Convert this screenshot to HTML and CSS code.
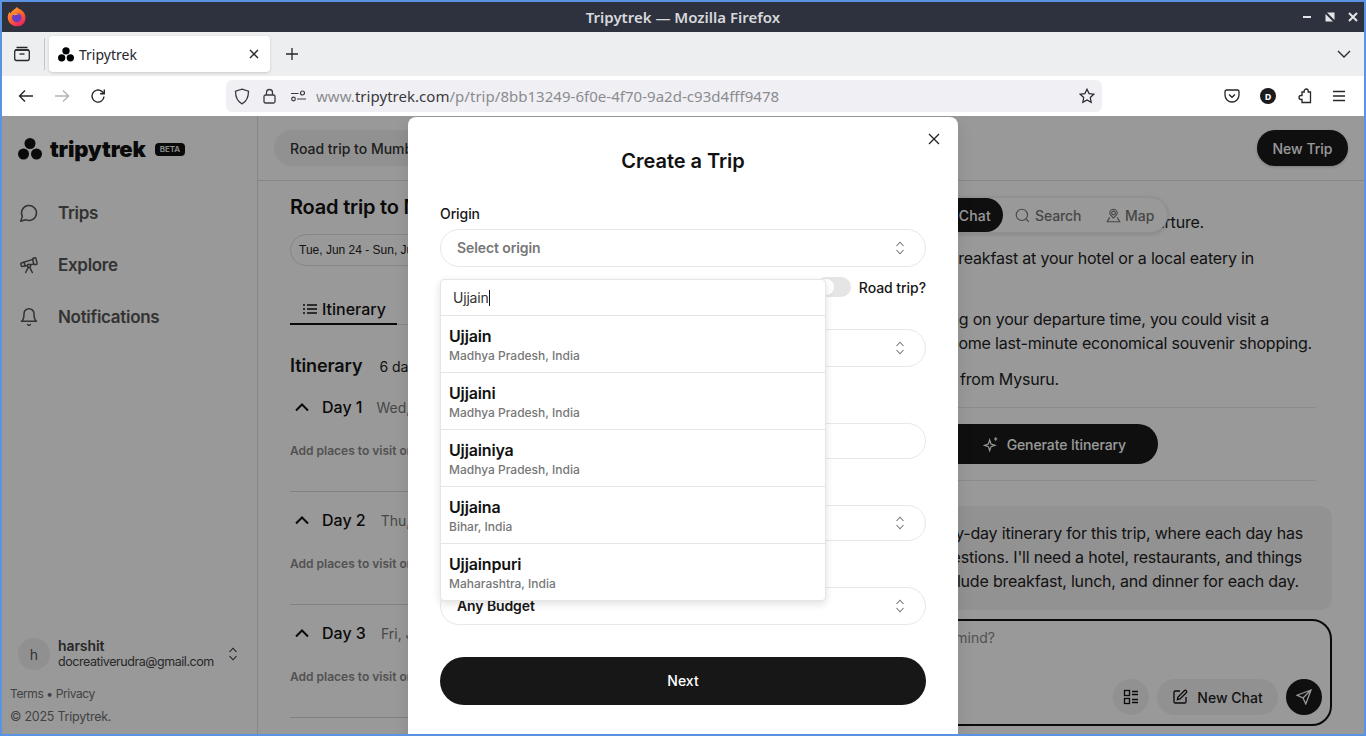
FILE: index.html
```html
<!DOCTYPE html>
<html>
	<head>
		<meta charset="UTF-8">
		<title>Tripytrek</title>
		<link rel="stylesheet" href="styles.css">
	</head>
	<body>
		<svg class="defs" width="0" height="0">
			<symbol id="dots" viewBox="0 0 24 22">
				<circle cx="12" cy="5.5" r="5.5"/>
				<circle cx="5.5" cy="16" r="5.5"/>
				<circle cx="18.5" cy="16" r="5.5"/>
			</symbol>
			<symbol id="updown" viewBox="0 0 16 16">
				<path d="M4.5 6 8 2.2 11.5 6M4.5 10 8 13.8 11.5 10" fill="none" stroke="currentColor" stroke-width="1.1"/>
			</symbol>
			<symbol id="chev" viewBox="0 0 16 16">
				<path d="M2 11.5 8 5.5l6 6" fill="none" stroke="currentColor" stroke-width="2"/>
			</symbol>
		</svg>
		<div class="window">
			<div class="titlebar">
				<svg class="fx" width="22" height="22" viewBox="0 0 20 20">
					<defs>
						<linearGradient id="fxg" x1="0" y1="0" x2="0.6" y2="1">
							<stop offset="0" stop-color="#ffb02e"/>
							<stop offset="0.55" stop-color="#ff6a2a"/>
							<stop offset="1" stop-color="#f0255f"/>
						</linearGradient>
					</defs>
					<path d="M10 1c.6 1.6 3.200 2 5 3.600 2.500 2.300 3.200 5.400 2.600 7.800C16.700 16.400 13.700 18.500 10 18.500 5.400 18.500 1.600 15 1.600 10.500c0-2 .6-3.700 1.500-5 .4.600.8 1 1.300 1.200C5.200 4 7.600 3.800 10 1z" fill="url(#fxg)"/>
					<circle cx="9.800" cy="10.600" r="4.300" fill="#6a3bc4"/>
					<path d="M5.200 7.500c2-1.200 5.800-1.400 7.400.6-1.600-.5-3-.3-4 .4z" fill="#ff9a2e"/>
				</svg>
				<span class="titlebar-text">Tripytrek — Mozilla Firefox</span>
				<div class="wm-btns">
					<svg width="12" height="12" viewBox="0 0 12 12"><rect x="2" y="5" width="8" height="2" fill="#e4e5e8"/></svg>
					<svg width="12" height="12" viewBox="0 0 12 12"><path d="M1.500 3v7.500H9zM3 1.500h7.500V9z" fill="#e4e5e8"/></svg>
					<svg width="12" height="12" viewBox="0 0 12 12"><path d="M2 2l8 8M10 2l-8 8" stroke="#e4e5e8" stroke-width="2"/></svg>
				</div>
			</div>

			<div class="tabbar">
				<div class="tab-side">
					<svg width="18" height="18" viewBox="0 0 18 18" fill="none" stroke="#26262b" stroke-width="1.300">
						<path d="M3.500 2.500h11M2 5h14"/>
						<rect x="1.700" y="5" width="14.600" height="10.500" rx="2"/>
						<path d="M6.500 9h5"/>
					</svg>
				</div>
				<div class="tab">
					<svg class="tab-ico" width="16" height="15"><use href="#dots"/></svg>
					<span class="tab-name">Tripytrek</span>
					<svg width="10" height="10" viewBox="0 0 10 10"><path d="M1 1l8 8M9 1L1 9" stroke="#26262b" stroke-width="1.400"/></svg>
				</div>
				<svg class="tab-plus" width="14" height="14" viewBox="0 0 14 14"><path d="M7 1v12M1 7h12" stroke="#26262b" stroke-width="1.300"/></svg>
				<svg class="tab-list" width="14" height="8" viewBox="0 0 14 8"><path d="M1 1l6 6 6-6" fill="none" stroke="#26262b" stroke-width="1.300"/></svg>
			</div>

			<div class="navbar">
				<svg class="nav-btn" width="16" height="14" viewBox="0 0 16 14" fill="none" stroke="#26262b" stroke-width="1.400"><path d="M15 7H1.500M7 1.500 1.500 7 7 12.500"/></svg>
				<svg class="nav-btn" width="16" height="14" viewBox="0 0 16 14" fill="none" stroke="#b4b4b8" stroke-width="1.400"><path d="M1 7h13.500M9 1.500 14.500 7 9 12.500"/></svg>
				<svg class="nav-btn" width="16" height="16" viewBox="0 0 16 16" fill="none" stroke="#26262b" stroke-width="1.400"><path d="M14 8.500A6 6 0 1 1 11.800 3.400L14 5.500"/><path d="M14.300 1.500v4.200h-4.200" /></svg>
				<div class="urlbar">
					<svg width="16" height="17" viewBox="0 0 16 17" fill="none" stroke="#3a3a40" stroke-width="1.300"><path d="M8 1.200 14.500 3.200c0 6-1.500 10-6.500 12.600C3 13.200 1.500 9.200 1.500 3.200z"/></svg>
					<svg width="13" height="16" viewBox="0 0 13 16" fill="none" stroke="#3a3a40" stroke-width="1.300"><rect x="1" y="7" width="11" height="8" rx="1.500"/><path d="M3.500 7V4.500a3 3 0 0 1 6 0V7"/></svg>
					<svg class="perm-ico" width="15" height="12" viewBox="0 0 15 12" fill="none" stroke="#3a3a40" stroke-width="1.200"><path d="M0 3.500h7.500M6 9h9"/><circle cx="11.500" cy="3" r="2"/><circle cx="2.500" cy="9" r="1.800"/></svg>
					<span class="url"><span class="url-soft">www.</span><span class="url-host">tripytrek.com</span><span class="url-soft">/p/trip/8bb13249-6f0e-4f70-9a2d-c93d4fff9478</span></span>
					<svg class="url-star" width="16" height="16" viewBox="0 0 16 16" fill="none" stroke="#26262b" stroke-width="1.200"><path d="M8 1.200l2.100 4.400 4.700.6-3.500 3.300.9 4.800L8 12l-4.200 2.300.9-4.800L1.200 6.200l4.700-.6z"/></svg>
				</div>
				<div class="nav-right">
					<svg width="16" height="14" viewBox="0 0 16 14" fill="none" stroke="#26262b" stroke-width="1.300"><path d="M2.500 1h11A1.500 1.500 0 0 1 15 2.500V6a7 7 0 0 1-14 0V2.500A1.500 1.500 0 0 1 2.500 1z"/><path d="M5 5.500 8 8.300l3-2.800"/></svg>
					<span class="ext-d">D</span>
					<svg width="16" height="16" viewBox="0 0 16 16" fill="none" stroke="#26262b" stroke-width="1.300"><path d="M6 4h2.200V3a2 2 0 0 1 4 0v1h2.300v10.500H6v-3H5a2 2 0 0 1 0-4h1z"/></svg>
					<svg width="14" height="12" viewBox="0 0 14 12" stroke="#26262b" stroke-width="1.300"><path d="M1 1.500h12M1 6h12M1 10.500h12"/></svg>
				</div>
			</div>

			<div class="app">
				<aside class="sidebar">
					<div class="logo">
						<svg class="logo-mark" width="24" height="22"><use href="#dots"/></svg>
						<span class="logo-text">tripytrek</span>
						<span class="beta">BETA</span>
					</div>
					<nav class="side-nav">
						<a class="side-item">
							<svg width="20" height="20" viewBox="0 0 24 24" class="side-ico"><path d="M7.900 20A9 9 0 1 0 4 16.100L2 22Z"/></svg>
							Trips
						</a>
						<a class="side-item">
							<svg width="20" height="20" viewBox="0 0 24 24" class="side-ico"><path d="m10.065 12.493-6.180 1.318a.934.934 0 0 1-1.108-.702l-.537-2.150a1.070 1.070 0 0 1 .691-1.265l13.504-4.440"/><path d="m13.560 11.747 4.332-.924"/><path d="m16 21-3.105-6.210"/><path d="M16.485 5.940a2 2 0 0 1 1.455-2.425l1.090-.272a1 1 0 0 1 1.212.727l1.515 6.060a1 1 0 0 1-.727 1.213l-1.090.272a2 2 0 0 1-2.425-1.455z"/><path d="m6.158 8.633 1.114 4.456"/><path d="m8 21 3.105-6.210"/><circle cx="12" cy="13" r="2"/></svg>
							Explore
						</a>
						<a class="side-item">
							<svg width="20" height="20" viewBox="0 0 24 24" class="side-ico"><path d="M6 8a6 6 0 0 1 12 0c0 7 3 9 3 9H3s3-2 3-9"/><path d="M10.300 21a1.940 1.940 0 0 0 3.400 0"/></svg>
							Notifications
						</a>
					</nav>
					<div class="user">
						<span class="avatar">h</span>
						<div class="user-info">
							<div class="user-name">harshit</div>
							<div class="user-mail">docreativerudra@gmail.com</div>
						</div>
						<svg class="user-chev" width="16" height="16"><use href="#updown"/></svg>
					</div>
					<div class="legal">Terms • Privacy</div>
					<div class="copy">© 2025 Tripytrek.</div>
				</aside>

				<div class="main">
					<header class="topbar">
						<span class="trip-pill">Road trip to Mumbai</span>
						<span class="new-trip">New Trip</span>
					</header>
					<div class="panels">
						<section class="plan">
							<h2 class="plan-title">Road trip to Mumbai</h2>
							<span class="date-pill">Tue, Jun 24 - Sun, Jun 29</span>
							<div class="plan-tabs">
								<span class="plan-tab">
									<svg width="14" height="12" viewBox="0 0 14 12" stroke="#111" stroke-width="1.300"><path d="M4 2h10M4 6h10M4 10h10M0 2h2M0 6h2M0 10h2"/></svg>
									Itinerary
								</span>
							</div>
							<div class="plan-head"><h3>Itinerary</h3><span>6 days</span></div>
							<div class="day">
								<div class="day-row"><svg width="16" height="16"><use href="#chev"/></svg><b>Day 1</b><span>Wed, Jun 24</span></div>
								<p>Add places to visit on this day</p>
							</div>
							<div class="day">
								<div class="day-row"><svg width="16" height="16"><use href="#chev"/></svg><b>Day 2</b><span class="day-date-wide">Thu, Jun 25</span></div>
								<p>Add places to visit on this day</p>
							</div>
							<div class="day">
								<div class="day-row"><svg width="16" height="16"><use href="#chev"/></svg><b>Day 3</b><span class="day-date-wide">Fri, Jun 26</span></div>
								<p>Add places to visit on this day</p>
							</div>
						</section>

						<section class="chat">
							<div class="chat-tabs">
								<span class="ct ct-on">Chat</span>
								<span class="ct ct-search">
									<svg width="15" height="15" viewBox="0 0 24 24" class="ct-ico"><circle cx="11" cy="11" r="9"/><path d="m22 22-4.500-4.500"/></svg>
									Search
								</span>
								<span class="ct ct-map">
									<svg width="15" height="15" viewBox="0 0 24 24" class="ct-ico"><circle cx="12" cy="8" r="3"/><path d="M12 16c-3-3-6-5-6-8a6 6 0 0 1 12 0c0 3-3 5-6 8z"/><path d="M6 15l-4 7h20l-4-7"/></svg>
									Map
								</span>
							</div>
							<div class="line l1">departure.</div>
							<div class="line l2">breakfast at your hotel or a local eatery in</div>
							<div class="line l3">ing on your departure time, you could visit a</div>
							<div class="line l4">some last-minute economical souvenir shopping.</div>
							<div class="line l5">from Mysuru.</div>
							<hr class="rule rule-a">
							<div class="gen-row">
								<span class="gen-btn">
									<svg width="16" height="16" viewBox="0 0 24 24" fill="none" stroke="currentColor" stroke-width="1.800"><path d="M10 6l2 6 6 2-6 2-2 6-2-6-6-2 6-2z"/><path d="M19 2v5M16.500 4.500h5"/></svg>
									Generate Itinerary
								</span>
							</div>
							<hr class="rule rule-b">
							<div class="bubble">
								<div class="line b1">day-by-day itinerary for this trip, where each day has</div>
								<div class="line b2">suggestions. I'll need a hotel, restaurants, and things</div>
								<div class="line b3">include breakfast, lunch, and dinner for each day.</div>
							</div>
							<div class="composer">
								<div class="placeholder">in mind?</div>
								<div class="composer-btns">
									<span class="round-btn">
										<svg width="16" height="16" viewBox="0 0 16 16" fill="none" stroke="#111" stroke-width="1.300"><rect x="1.500" y="1.500" width="5" height="5"/><rect x="1.500" y="9.500" width="5" height="5"/><path d="M9 2.500h6M9 5.500h6M9 10.500h6M9 13.500h6"/></svg>
									</span>
									<span class="chat-btn">
										<svg width="16" height="16" viewBox="0 0 24 24" fill="none" stroke="#111" stroke-width="2"><path d="M12 3H5a2 2 0 0 0-2 2v14a2 2 0 0 0 2 2h14a2 2 0 0 0 2-2v-7"/><path d="M18.400 2.600a2.100 2.100 0 1 1 3 3L12 15l-4 1 1-4z"/></svg>
										New Chat
									</span>
									<span class="send-btn">
										<svg width="16" height="16" viewBox="0 0 16 16" fill="none" stroke="#fff" stroke-width="1.300"><path d="M15 1 1 6.200l6 2.800 2.800 6zM15 1 7 9"/></svg>
									</span>
								</div>
							</div>
						</section>
					</div>
				</div>

				<div class="overlay"></div>

				<div class="modal">
					<svg class="modal-x" width="12" height="12" viewBox="0 0 12 12"><path d="M1 1l10 10M11 1 1 11" stroke="#222" stroke-width="1.300"/></svg>
					<h1 class="modal-title">Create a Trip</h1>
					<label class="lbl">Origin</label>
					<div class="sel sel-first"><span class="sel-ph">Select origin</span><svg width="16" height="16"><use href="#updown"/></svg></div>
					<div class="road-row">
						<span class="toggle"><i></i></span>
						<span class="road-text">Road trip?</span>
					</div>
					<div class="sel sel-dest"><svg width="16" height="16"><use href="#updown"/></svg></div>
					<div class="sel sel-short sel-dates"></div>
					<div class="sel sel-short sel-people"><svg width="16" height="16"><use href="#updown"/></svg></div>
					<div class="sel sel-budget"><span class="sel-val">Any Budget</span><svg width="16" height="16"><use href="#updown"/></svg></div>
					<div class="next">Next</div>

					<div class="drop">
						<div class="drop-search"><span>Ujjain</span><i class="caret"></i></div>
						<div class="opt"><div class="opt-name">Ujjain</div><div class="opt-sub">Madhya Pradesh, India</div></div>
						<div class="opt"><div class="opt-name">Ujjaini</div><div class="opt-sub">Madhya Pradesh, India</div></div>
						<div class="opt"><div class="opt-name">Ujjainiya</div><div class="opt-sub">Madhya Pradesh, India</div></div>
						<div class="opt"><div class="opt-name">Ujjaina</div><div class="opt-sub">Bihar, India</div></div>
						<div class="opt"><div class="opt-name">Ujjainpuri</div><div class="opt-sub">Maharashtra, India</div></div>
					</div>
				</div>
			</div>
		</div>
	</body>
</html>
```
FILE: styles.css
```css
*{
	box-sizing: border-box;
}
body{
	margin: 0;
	font-family: Inter, "Liberation Sans", sans-serif;
	color: #171717;
	background: #fff;
}
h1,h2,h3,p{
	margin: 0;
}
.defs{
	position: absolute;
}
.window{
	width: 1366px;
	height: 736px;
	border: 2px solid #5a93e2;
	display: flex;
	flex-direction: column;
	overflow: hidden;
}

/* browser chrome */
.titlebar{
	height: 30px;
	background: #2e323e;
	display: flex;
	align-items: center;
	position: relative;
	flex: none;
}
.fx{
	margin-left: 4px;
}
.titlebar-text{
	position: absolute;
	left: 0;
	right: 0;
	text-align: center;
	font: 600 15px "Noto Sans", sans-serif;
	color: #d8d9dd;
}
.wm-btns{
	margin-left: auto;
	margin-right: 5px;
	display: flex;
	gap: 11px;
}
.tabbar{
	height: 44px;
	background: #edeef0;
	display: flex;
	align-items: center;
	flex: none;
}
.tab-side{
	width: 43px;
	height: 32px;
	border-right: 1px solid #c4c5c9;
	display: flex;
	align-items: center;
	justify-content: center;
	padding-right: 2px;
}
.tab{
	width: 221px;
	height: 36px;
	margin-left: 4px;
	background: #fff;
	border-radius: 4px;
	box-shadow: 0 1px 3px rgba(0,0,0,0.15);
	display: flex;
	align-items: center;
	padding: 0 11px 0 9px;
}
.tab-ico{
	margin-right: 5px;
}
.tab-name{
	font: 14px "Noto Sans", sans-serif;
	color: #26262b;
	flex: 1;
}
.tab-plus{
	margin-left: 15px;
}
.tab-list{
	margin-left: auto;
	margin-right: 13px;
}
.navbar{
	height: 40px;
	background: #fff;
	display: flex;
	align-items: center;
	padding-left: 16px;
	flex: none;
}
.nav-btn{
	margin-right: 20px;
}
.urlbar{
	width: 876px;
	height: 32px;
	margin-left: 100px;
	background: #f0f0f4;
	border-radius: 6px;
	display: flex;
	align-items: center;
	padding: 0 8px;
	gap: 13px;
}
.perm-ico{
	margin-left: 2px;
}
.url{
	font: 15px "Noto Sans", sans-serif;
	color: #8b8b90;
	white-space: nowrap;
	margin-left: -3px;
	letter-spacing: 0.03px;
}
.url-host{
	color: #3a3a3e;
}
.url-star{
	margin-left: auto;
	margin-right: -1px;
}
.nav-right{
	display: flex;
	align-items: center;
	gap: 20px;
	margin-left: 122px;
}
.ext-d{
	width: 16px;
	height: 16px;
	border-radius: 50%;
	background: #1b1b1f;
	color: #fff;
	font: 700 9px "Noto Sans", sans-serif;
	display: flex;
	align-items: center;
	justify-content: center;
}

/* app */
.app{
	position: relative;
	flex: 1;
	display: flex;
	overflow: hidden;
	min-height: 0;
}
.sidebar{
	width: 256px;
	flex: none;
	border-right: 1px solid #e2e2e2;
	display: flex;
	flex-direction: column;
	padding: 22px 8px 0;
}
.logo{
	display: flex;
	align-items: center;
	height: 22px;
	padding-left: 8px;
}
.logo-mark{
	fill: #111;
	flex: none;
}
.logo-text{
	font: 900 22px Inter, sans-serif;
	color: #111;
	margin-left: 8px;
	letter-spacing: -0.2px;
}
.beta{
	background: #111;
	color: #eee;
	font-size: 8px;
	font-weight: 600;
	line-height: 13px;
	padding: 0 5px;
	border-radius: 4px;
	margin-left: 9px;
}
.side-nav{
	margin-top: 35px;
	display: flex;
	flex-direction: column;
	gap: 16px;
}
.side-item{
	height: 36px;
	display: flex;
	align-items: center;
	gap: 19px;
	padding-left: 9px;
	font-size: 17px;
	font-weight: 600;
	color: #555;
	letter-spacing: -0.3px;
}
.side-ico{
	fill: none;
	stroke: #555;
	stroke-width: 1.8;
	stroke-linecap: round;
	stroke-linejoin: round;
}
.user{
	margin-top: auto;
	display: flex;
	align-items: center;
	padding-left: 8px;
}
.avatar{
	width: 32px;
	height: 32px;
	border-radius: 50%;
	background: #f0f0f0;
	color: #555;
	font-size: 14px;
	display: flex;
	align-items: center;
	justify-content: center;
	flex: none;
}
.user-info{
	margin-left: 8px;
	width: 167px;
}
.user-name{
	font-size: 14px;
	font-weight: 600;
	color: #444;
	line-height: 16px;
	letter-spacing: -0.1px;
}
.user-mail{
	font-size: 12.5px;
	color: #444;
	line-height: 16px;
	white-space: nowrap;
	letter-spacing: -0.44px;
}
.user-chev{
	color: #333;
}
.legal{
	font-size: 12px;
	color: #6f6f6f;
	margin-top: 16px;
	line-height: 16px;
	letter-spacing: -0.4px;
}
.copy{
	font-size: 12.5px;
	color: #6f6f6f;
	margin-top: 7px;
	line-height: 16px;
	margin-bottom: 9px;
	letter-spacing: -0.25px;
}
.main{
	flex: 1;
	min-width: 0;
	display: flex;
	flex-direction: column;
}
.topbar{
	height: 65px;
	flex: none;
	border-bottom: 1px solid #e2e2e2;
	display: flex;
	align-items: center;
	justify-content: space-between;
	padding: 0 16px 0 16px;
}
.trip-pill{
	height: 36px;
	padding: 0 16px;
	border-radius: 18px;
	background: #f2f2f2;
	font-size: 14px;
	font-weight: 500;
	display: flex;
	align-items: center;
	color: #333;
}
.new-trip{
	width: 91px;
	height: 36px;
	border-radius: 18px;
	background: #191919;
	color: #fff;
	font-size: 14px;
	font-weight: 500;
	display: flex;
	align-items: center;
	justify-content: center;
	box-shadow: 0 1px 3px rgba(0,0,0,0.2);
}
.panels{
	flex: 1;
	display: flex;
	min-height: 0;
}
.plan{
	width: 600px;
	flex: none;
	padding: 13px 0 0 32px;
	overflow: hidden;
}
.plan-title{
	font-size: 20px;
	font-weight: 600;
	line-height: 26px;
	letter-spacing: -0.2px;
	color: #111;
	white-space: nowrap;
}
.date-pill{
	display: inline-flex;
	align-items: center;
	height: 32px;
	margin-top: 14px;
	padding: 0 8px;
	border: 1px solid #e0e0e0;
	border-radius: 16px;
	font: 12px "Liberation Sans", sans-serif;
	color: #222;
}
.plan-tabs{
	border-bottom: 1px solid #e2e2e2;
	height: 47px;
	display: flex;
	align-items: flex-end;
	margin-top: 12px;
}
.plan-tab{
	width: 107px;
	height: 36px;
	border-bottom: 2px solid #111;
	margin-bottom: -1px;
	display: flex;
	align-items: center;
	padding: 6px 0 0 13px;
	gap: 5px;
	font-size: 16px;
	font-weight: 500;
	color: #111;
}
.plan-head{
	display: flex;
	align-items: center;
	gap: 17px;
	margin-top: 29px;
	white-space: nowrap;
}
.plan-head h3{
	font-size: 18px;
	font-weight: 600;
	line-height: 24px;
	letter-spacing: -0.1px;
}
.plan-head span{
	font-size: 14px;
	color: #222;
}
.day{
	height: 113px;
	border-bottom: 1px solid #d8d8d8;
	white-space: nowrap;
	padding-top: 17px;
}
.plan-head + .day{
	height: 114px;
	padding-top: 18px;
}
.day-row{
	display: flex;
	align-items: center;
	height: 22px;
	padding-left: 4px;
	color: #111;
}
.day-row b{
	font-size: 16px;
	font-weight: 500;
	margin-left: 12px;
}
.day-row span{
	font-size: 14px;
	color: #777;
	margin-left: 14px;
}
.day-row .day-date-wide{
	margin-left: 15px;
}
.day p{
	font-size: 12px;
	font-weight: 600;
	color: #888;
	margin-top: 25px;
	line-height: 16px;
}

/* chat side */
.chat{
	flex: 1;
	min-width: 0;
	position: relative;
	padding: 29px 32px 0 0;
}
.chat-tabs{
	position: absolute;
	top: 16px;
	left: 65px;
	width: 245px;
	height: 36px;
	border-radius: 18px;
	background: #fff;
	box-shadow: 0 1px 4px rgba(0,0,0,0.15);
	border: 1px solid #eee;
	display: flex;
	align-items: center;
	font-size: 14px;
	font-weight: 500;
	color: #777;
}
.ct{
	height: 34px;
	border-radius: 18px;
	display: flex;
	align-items: center;
	flex: none;
}
.ct-on{
	width: 79px;
	background: #191919;
	color: #fff;
	justify-content: flex-end;
	padding-right: 12px;
	letter-spacing: 0.2px;
}
.ct-search{
	width: 90px;
	padding-left: 12px;
	gap: 5px;
	letter-spacing: -0.1px;
}
.ct-map{
	width: 74px;
	padding-left: 13px;
	gap: 4px;
}
.ct-ico{
	fill: none;
	stroke: currentColor;
	stroke-width: 1.800;
}
.line{
	font-size: 16px;
	line-height: 24px;
	text-align: right;
	white-space: nowrap;
	color: #222;
	letter-spacing: -0.2px;
}
.l1{
	padding-right: 128px;
}
.l2{
	margin-top: 12px;
	padding-right: 78px;
}
.l3{
	margin-top: 37px;
	padding-right: 63px;
}
.l4{
	padding-right: 20px;
}
.l5{
	margin-top: 12px;
	padding-right: 273px;
}
.rule{
	border: 0;
	border-top: 1px solid #e8e8e8;
	margin: 0 16px 0 0;
}
.rule-a{
	margin-top: 16px;
}
.gen-row{
	margin-top: 16px;
	padding-left: 80px;
}
.gen-btn{
	display: inline-flex;
	align-items: center;
	justify-content: flex-end;
	gap: 8px;
	width: 220px;
	height: 40px;
	border-radius: 20px;
	background: #191919;
	color: #fff;
	font-size: 14px;
	font-weight: 500;
	letter-spacing: -0.1px;
	padding-right: 32px;
}
.rule-b{
	margin-top: 16px;
}
.bubble{
	margin-top: 25px;
	height: 104px;
	border-radius: 12px;
	background: #f4f4f4;
	padding-top: 15px;
}
.b1{
	padding-right: 29px;
}
.b2{
	padding-right: 30px;
}
.b3{
	padding-right: 33px;
}
.composer{
	margin-top: 9px;
	height: 107px;
	border: 2px solid #111;
	border-radius: 20px;
	padding-top: 7px;
}
.placeholder{
	font-size: 14px;
	line-height: 20px;
	color: #888;
	text-align: right;
	padding-right: 335px;
}
.composer-btns{
	display: flex;
	justify-content: flex-end;
	align-items: center;
	gap: 8px;
	margin-top: 31px;
	padding-right: 8px;
}
.round-btn{
	width: 36px;
	height: 36px;
	border-radius: 50%;
	background: #f2f2f2;
	display: flex;
	align-items: center;
	justify-content: center;
}
.chat-btn{
	width: 121px;
	height: 36px;
	border-radius: 18px;
	background: #f2f2f2;
	display: flex;
	align-items: center;
	justify-content: center;
	gap: 9px;
	font-size: 14px;
	font-weight: 500;
	color: #222;
}
.send-btn{
	width: 36px;
	height: 36px;
	border-radius: 50%;
	background: #191919;
	display: flex;
	align-items: center;
	justify-content: center;
}

/* modal */
.overlay{
	position: absolute;
	left: 0;
	top: 0;
	right: 0;
	bottom: 0;
	background: rgba(0,0,0,0.4);
}
.modal{
	position: absolute;
	left: 406px;
	top: 1px;
	width: 550px;
	height: 640px;
	background: #fff;
	border-radius: 8px;
	padding: 30px 32px 0;
	box-shadow: 0 4px 16px rgba(0,0,0,0.1);
}
.modal-x{
	position: absolute;
	top: 16px;
	right: 18px;
}
.modal-title{
	font-size: 20px;
	font-weight: 600;
	line-height: 28px;
	text-align: center;
	color: #111;
	letter-spacing: -0.05px;
}
.lbl{
	display: block;
	margin-top: 29px;
	font-size: 14px;
	font-weight: 500;
	line-height: 20px;
	color: #171717;
	letter-spacing: -0.1px;
}
.sel{
	height: 38px;
	border: 1px solid #e8e8e8;
	border-radius: 20px;
	display: flex;
	align-items: center;
	justify-content: flex-end;
	padding: 0 17px 2px 16px;
	color: #777;
	font-size: 14px;
}
.sel svg{
	margin-top: 2px;
}
.sel-first{
	margin-top: 5px;
}
.sel-ph{
	font-weight: 600;
	color: #777;
	margin-right: auto;
	letter-spacing: -0.1px;
}
.sel-val{
	font-weight: 600;
	color: #171717;
	margin-right: auto;
	letter-spacing: -0.1px;
}
.road-row{
	margin-top: 10px;
	height: 20px;
	display: flex;
	align-items: center;
	justify-content: flex-end;
	gap: 8px;
}
.toggle{
	width: 35px;
	height: 20px;
	border-radius: 10px;
	background: #e5e5e5;
	padding: 2px;
	display: flex;
}
.toggle i{
	width: 16px;
	height: 16px;
	border-radius: 50%;
	background: #fff;
}
.road-text{
	font-size: 14px;
	font-weight: 500;
	color: #171717;
	letter-spacing: -0.06px;
}
.sel-dest{
	margin-top: 32px;
}
.sel-short{
	height: 36px;
}
.sel-dates{
	margin-top: 56px;
}
.sel-people{
	margin-top: 46px;
}
.sel-budget{
	margin-top: 46px;
}
.next{
	margin-top: 32px;
	height: 48px;
	border-radius: 24px;
	background: #171717;
	color: #fff;
	font-size: 14px;
	font-weight: 500;
	display: flex;
	align-items: center;
	justify-content: center;
	padding-bottom: 2px;
}
.drop{
	position: absolute;
	left: 32px;
	top: 162px;
	width: 386px;
	height: 322px;
	background: #fff;
	border: 1px solid #e5e5e5;
	border-radius: 4px;
	box-shadow: 0 3px 8px rgba(0,0,0,0.12);
}
.drop-search{
	height: 35px;
	display: flex;
	align-items: center;
	padding-left: 12px;
	font-size: 14px;
	color: #333;
	letter-spacing: -0.2px;
}
.caret{
	width: 1px;
	height: 16px;
	background: #111;
}
.opt{
	height: 57px;
	border-top: 1px solid #e5e5e5;
	padding: 10px 8px 0;
}
.opt-name{
	font-size: 16px;
	font-weight: 600;
	line-height: 20px;
	color: #111;
	letter-spacing: -0.15px;
}
.opt-sub{
	font-size: 12px;
	font-weight: 500;
	line-height: 16px;
	color: #777;
	margin-top: 2px;
}
```
